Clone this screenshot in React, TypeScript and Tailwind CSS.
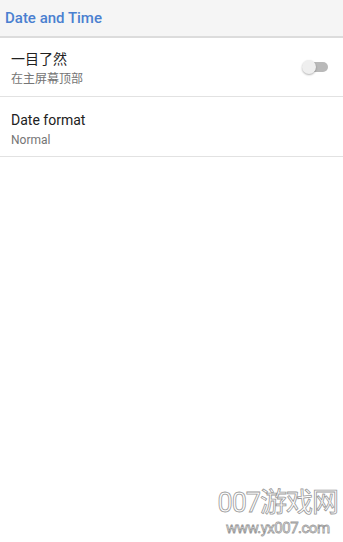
export default function App() {
  return (
    <div className="relative flex h-[542px] w-[343px] flex-col overflow-hidden bg-white font-['Roboto','Noto_Sans_CJK_SC',sans-serif]">
      <header className="flex h-[38px] shrink-0 items-center border-b-2 border-[#dcdcdc] bg-[#f5f5f5] px-[5px]">
        <h1 className="text-[15px] font-medium text-[#4a80d0]">Date and Time</h1>
      </header>

      <div className="flex h-[59px] items-center border-b border-[#e2e2e2] pl-[11px] pr-[15px]">
        <div className="flex flex-1 flex-col gap-[1px] pt-[3px]">
          <span className="text-[14px] leading-[19px] text-[#212121]">一目了然</span>
          <span className="text-[12px] leading-[18px] text-[#757575]">在主屏幕顶部</span>
        </div>
        <div className="relative flex h-[14px] w-[26px] items-center">
          <div className="ml-[6px] h-[10px] w-[20px] rounded-full bg-[#b9b9b9]" />
          <div className="absolute left-0 top-0 h-[14px] w-[14px] rounded-full bg-[#efefef] shadow-[0_1px_2px_rgba(0,0,0,0.3)]" />
        </div>
      </div>

      <div className="flex h-[60px] flex-col justify-center gap-[1px] border-b border-[#e2e2e2] pl-[11px] pt-[6px]">
        <span className="text-[14px] leading-[19px] text-[#212121]">Date format</span>
        <span className="text-[12px] leading-[18px] text-[#757575]">Normal</span>
      </div>

      <div className="absolute bottom-[6px] right-[5px] flex flex-col items-center text-transparent [-webkit-text-stroke:0.8px_#9a9a9a]">
        <span className="text-[27px] leading-[30px] tracking-[-1px]">007游戏网</span>
        <span className="mt-[2px] text-[15px] leading-[16px] tracking-[-0.5px]">www.yx007.com</span>
      </div>
    </div>
  );
}
